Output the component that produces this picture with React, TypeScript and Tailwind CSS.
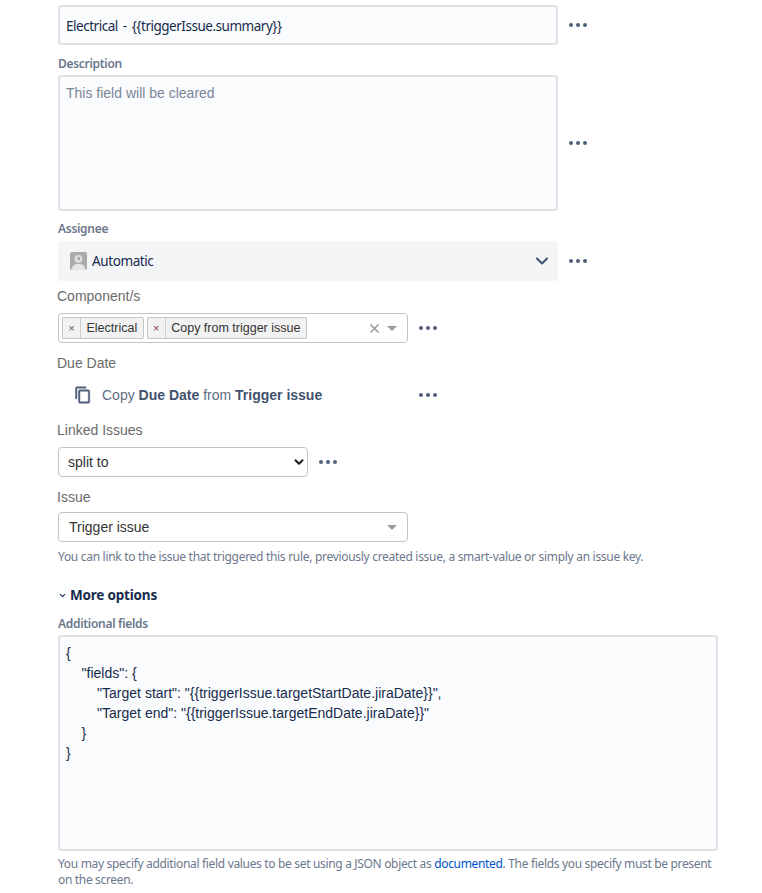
import { ChevronDown } from 'lucide-react';

const segoe = 'font-["Noto_Sans",sans-serif]';
const arial = 'font-["Liberation_Sans",sans-serif]';

function Dots({ className = '' }: { className?: string }) {
  return (
    <span className={`flex gap-[3px] ${className}`}>
      <i className="w-[4px] h-[4px] rounded-full bg-[#505f79]" />
      <i className="w-[4px] h-[4px] rounded-full bg-[#505f79]" />
      <i className="w-[4px] h-[4px] rounded-full bg-[#505f79]" />
    </span>
  );
}

function Caret() {
  return <span className="w-0 h-0 border-x-[5.5px] border-x-transparent border-t-[5px] border-t-[#999999]" />;
}

function AtlasLabel({ text, className = '' }: { text: string; className?: string }) {
  return <div className={`${segoe} text-[12px] leading-[16px] font-semibold tracking-[-0.3px] text-[#6b778c] ${className}`}>{text}</div>;
}

function PlainLabel({ text, className = '' }: { text: string; className?: string }) {
  return <div className={`${arial} -ml-[1px] text-[14px] leading-[20px] text-[#6b6b6b] ${className}`}>{text}</div>;
}

function Tag({ text, red }: { text: string; red?: boolean }) {
  return (
    <span className="flex h-[22px] items-center rounded-[2px] border border-[#c4c4c4] bg-[#f2f2f2] text-[12.5px] text-[#333333]">
      <span className={`flex h-full w-[18px] items-center justify-center border-r border-[#d0d0d0] text-[11px] ${red ? 'text-[#8c3a3a]' : 'text-[#505f79]'}`}>×</span>
      <span className="px-[5.5px]">{text}</span>
    </span>
  );
}

export default function App() {
  return (
    <div className="h-[893px] w-[762px] overflow-hidden bg-white pl-[58px] pt-[5px]">
      <div className="flex items-center">
        <div className={`${segoe} flex h-[40px] w-[500px] items-center rounded-[3px] border-2 border-[#dfe1e6] bg-[#fafbfc] px-[6px] pt-[2px] text-[13.5px] tracking-[-0.48px] [word-spacing:2px] text-[#172b4d]`}>
          Electrical - {'{{triggerIssue.summary}}'}
        </div>
        <Dots className="ml-[11px] mb-[1px]" />
      </div>

      <AtlasLabel text="Description" className="mt-[11px]" />
      <div className="mt-[3px] flex items-center">
        <div className={`${arial} h-[136px] w-[500px] rounded-[3px] border-2 border-[#dfe1e6] bg-[#fafbfc] px-[6px] pt-[6px] text-[14px] leading-[20px] text-[#7a869a]`}>
          This field will be cleared
        </div>
        <Dots className="ml-[11px]" />
      </div>

      <AtlasLabel text="Assignee" className="mt-[10px]" />
      <div className="mt-[4px] flex items-center">
        <div className="flex h-[40px] w-[500px] items-center rounded-[3px] bg-[#f4f5f7] pl-[12px] pr-[6px]">
          <svg width="17" height="18" viewBox="0 0 17 18">
            <rect width="17" height="18" rx="2" fill="#ababab" />
            <circle cx="8.5" cy="7" r="4" fill="#dcdcdc" />
            <path d="M1.500 18c.5-4.500 3.200-6 7-6s6.500 1.500 7 6z" fill="#e6e6e6" />
            <rect x="8" y="5" width="1.400" height="3" fill="#8a8a8a" />
          </svg>
          <span className={`${segoe} ml-[5px] text-[13.5px] tracking-[-0.4px] text-[#172b4d]`}>Automatic</span>
          <ChevronDown className="ml-auto" size={20} strokeWidth={2.5} color="#42526e" />
        </div>
        <Dots className="ml-[11px]" />
      </div>

      <PlainLabel text="Component/s" className="mt-[5px]" />
      <div className="mt-[7px] flex items-center">
        <div className={`${arial} flex h-[30px] w-[350px] items-center gap-[3px] rounded-[4px] border border-[#c4c4c4] bg-white pl-[3px] pr-[10px] text-[14px] leading-[20px]`}>
          <Tag text="Electrical" />
          <Tag text="Copy from trigger issue" red />
          <svg width="9" height="9" viewBox="0 0 9 9" className="ml-auto mr-[5px]" stroke="#999999" strokeWidth="1.5">
            <path d="M.5.5l8 8M8.500.5l-8 8" />
          </svg>
          <Caret />
        </div>
        <Dots className="ml-[11px]" />
      </div>

      <PlainLabel text="Due Date" className="mt-[10px]" />
      <div className="mt-[12px] flex w-[379px] items-center pl-[16px]">
        <svg width="18" height="18" viewBox="0 0 24 24" fill="#505f79" stroke="#505f79" strokeWidth="0.6">
          <path d="M16 1H4c-1.100 0-2 .9-2 2v14h2V3h12V1zm3 4H8c-1.100 0-2 .9-2 2v14c0 1.100.9 2 2 2h11c1.100 0 2-.9 2-2V7c0-1.100-.9-2-2-2zm0 16H8V7h11v14z" />
        </svg>
        <span className={`${arial} ml-[10px] text-[14px] leading-[20px] text-[#5e6c84]`}>
          Copy <b className="text-[#42526e]">Due Date</b> from <b className="text-[#42526e]">Trigger issue</b>
        </span>
        <Dots className="ml-auto" />
      </div>

      <PlainLabel text="Linked Issues" className="mt-[15px]" />
      <div className="mt-[7px] flex items-center">
        <div className={`${arial} flex h-[30px] w-[250px] items-center rounded-[4px] border border-[#c4c4c4] bg-white pl-[9px] pr-[1px] text-[14px] text-[#333333]`}>
          split to
          <ChevronDown className="ml-auto" size={14} strokeWidth={3.5} color="#222222" />
        </div>
        <Dots className="ml-[11px]" />
      </div>

      <PlainLabel text="Issue" className="mt-[10px]" />
      <div className={`${arial} mt-[5px] flex h-[30px] w-[350px] items-center rounded-[4px] border border-[#c4c4c4] bg-white pl-[10px] pr-[10px] text-[14px] text-[#333333]`}>
        Trigger issue
        <span className="ml-auto flex"><Caret /></span>
      </div>
      <div className={`${segoe} mt-[7px] text-[12px] leading-[16px] tracking-[-0.3px] text-[#6b778c]`}>
        You can link to the issue that triggered this rule, previously created issue, a smart-value or simply an issue key.
      </div>

      <div className={`${segoe} mt-[20px] flex items-center text-[13.5px] leading-[20px] font-bold tracking-[-0.2px] text-[#172b4d]`}>
        <ChevronDown size={9} strokeWidth={3} className="mr-[3px]" />
        More options
      </div>

      <AtlasLabel text="Additional fields" className="mt-[11px]" />
      <div className={`${arial} mt-[3px] h-[216px] w-[660px] whitespace-pre rounded-[3px] border-2 border-[#dfe1e6] bg-[#fafbfc] px-[6px] pt-[6px] text-[14px] leading-[20px] text-[#172b4d]`}>
        {'{\n    "fields": {\n        "Target start": "{{triggerIssue.targetStartDate.jiraDate}}",\n        "Target end": "{{triggerIssue.targetEndDate.jiraDate}}"\n    }\n}'}
      </div>
      <div className={`${segoe} mt-[5px] w-[660px] text-[12px] leading-[16px] tracking-[-0.33px] text-[#6b778c]`}>
        You may specify additional field values to be set using a JSON object as <a className="text-[#0052cc]">documented</a>. The fields you specify must be present on the screen.
      </div>
    </div>
  );
}
